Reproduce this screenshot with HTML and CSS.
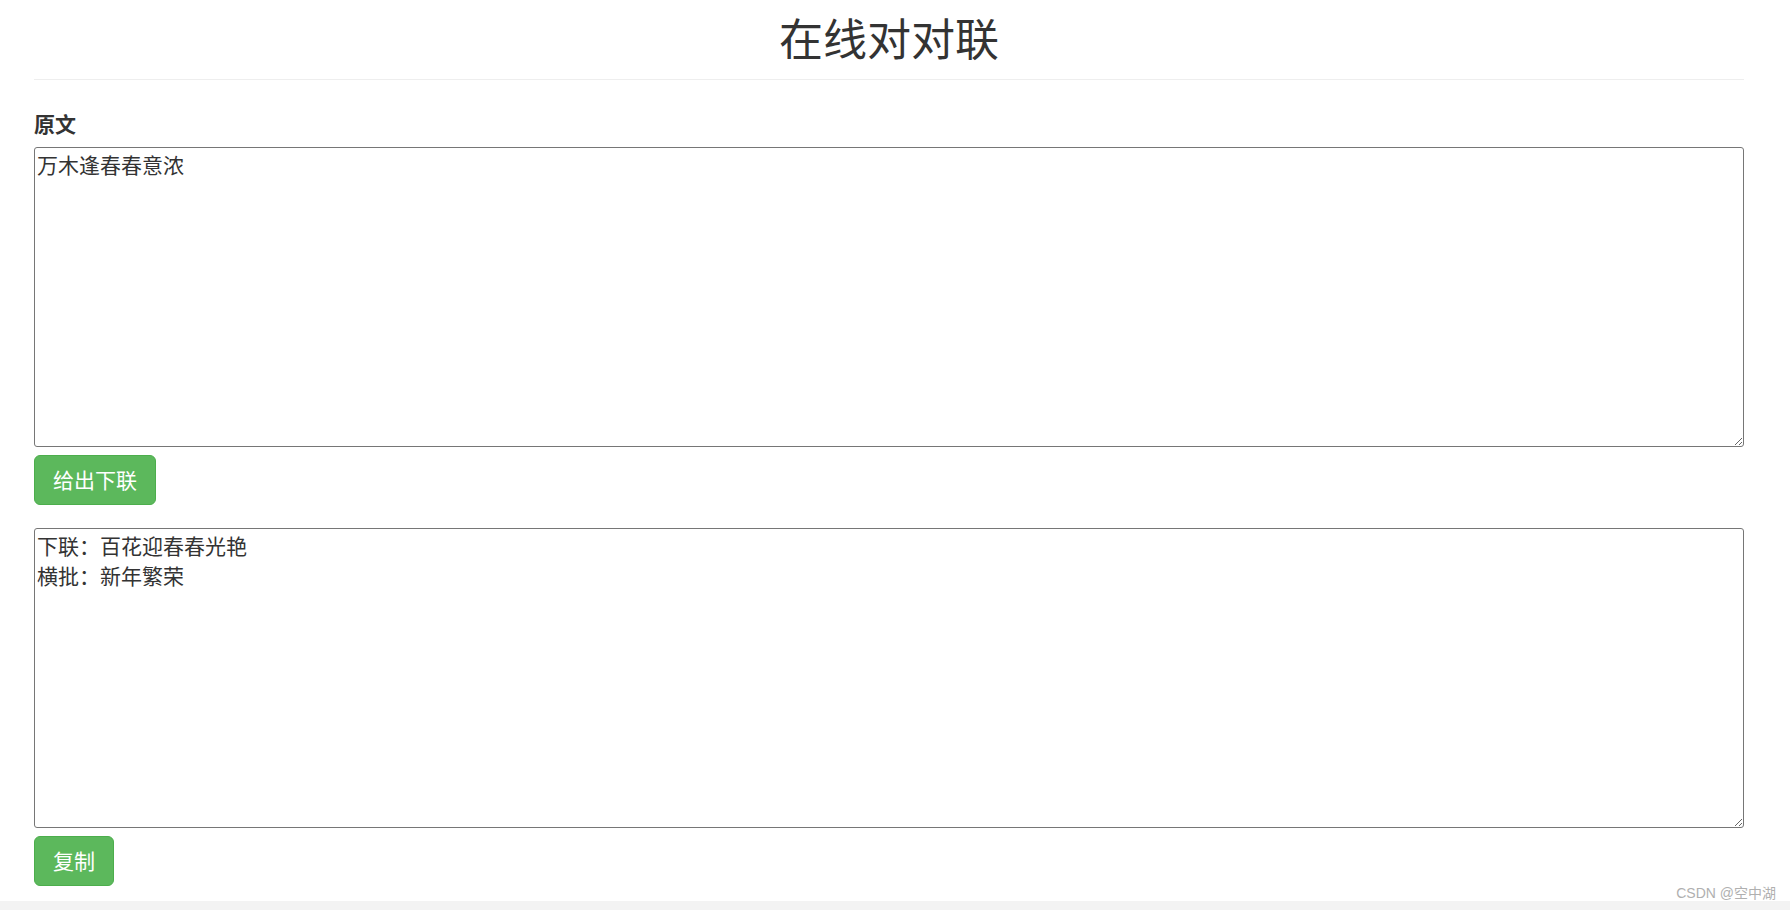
FILE: index.html
```html
<!DOCTYPE html>
<html lang="zh-CN">
<head>
    <meta charset="UTF-8">
    <meta name="viewport" content="width=device-width, initial-scale=1.0">
    <title>在线对对联</title>
    <link rel="stylesheet" href="styles.css">
</head>
<body>
    <div class="container">
        <div class="page-header">
            <h1>在线对对联</h1>
        </div>

        <label for="source" class="field-label">原文</label>
        <textarea id="source" class="text-box">万木逢春春意浓</textarea>
        <button type="button" class="btn-success">给出下联</button>

        <textarea id="result" class="text-box result-box">下联：百花迎春春光艳
横批：新年繁荣</textarea>
        <button type="button" class="btn-success">复制</button>
    </div>

    <div class="page-bottom"></div>
    <div class="watermark">CSDN @空中湖</div>
</body>
</html>
```

FILE: styles.css
```css
body {
    margin: 0;
    padding: 0;
    background: #fff;
    color: #333;
    font-family: "Noto Sans CJK SC", "Liberation Sans", sans-serif;
    font-size: 21px;
    line-height: 30px;
    position: relative;
    min-height: 910px;
}

.container {
    margin-left: 34px;
    width: 1710px;
}

.page-header {
    padding: 13px 0 18px;
    border-bottom: 1px solid #eee;
    text-align: center;
}

.page-header h1 {
    margin: 0;
    font-size: 44px;
    line-height: 48px;
    font-weight: 400;
    color: #333;
}

.field-label {
    display: block;
    margin: 28px 0 9px;
    font-weight: 700;
    font-size: 21px;
    line-height: 30px;
}

.text-box {
    display: block;
    box-sizing: border-box;
    width: 100%;
    height: 300px;
    margin: 0;
    padding: 1px 2px 2px;
    border: 1px solid #767676;
    border-radius: 3px;
    font-family: "Noto Sans CJK SC", "Liberation Sans", sans-serif;
    font-size: 21px;
    line-height: 30px;
    color: #333;
    background: #fff;
}

.result-box {
    margin-top: 23px;
}

.btn-success {
    display: block;
    margin-top: 8px;
    padding: 8px 18px 10px;
    font-family: "Noto Sans CJK SC", "Liberation Sans", sans-serif;
    font-size: 21px;
    line-height: 30px;
    color: #fff;
    background-color: #5cb85c;
    border: 1px solid #4cae4c;
    border-radius: 6px;
    cursor: pointer;
}

.page-bottom {
    margin-top: 15px;
    height: 9px;
    background: #f3f3f3;
}

.watermark {
    position: absolute;
    right: 14px;
    bottom: 9px;
    font-family: "Liberation Sans", "Noto Sans CJK SC", sans-serif;
    font-size: 14px;
    line-height: 16px;
    color: #b0b0b0;
}
```
